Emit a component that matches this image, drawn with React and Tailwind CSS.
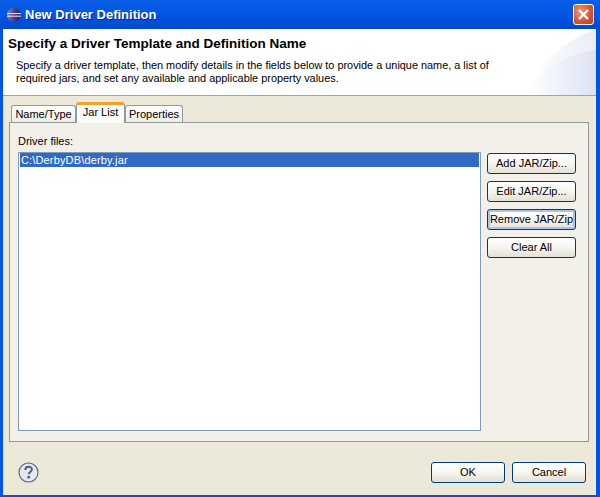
import React from "react";

const font = "font-['Liberation_Sans',Arial,sans-serif]";

const EclipseIcon = () => (
  <svg width="14" height="14" viewBox="0 0 14 14" className="shrink-0">
    <defs>
      <linearGradient id="sphere" x1="0" y1="0" x2="1" y2="0.15">
        <stop offset="0" stopColor="#9a8fc4" />
        <stop offset="0.55" stopColor="#45418a" />
        <stop offset="1" stopColor="#2a2866" />
      </linearGradient>
    </defs>
    <circle cx="7" cy="7" r="7" fill="url(#sphere)" />
    <path d="M0 5.6h14M0 8.2h14" stroke="#e9e9f4" strokeWidth="1" />
  </svg>
);

const CloseIcon = () => (
  <div className="w-[21px] h-[21px] rounded-[3px] border border-white bg-[radial-gradient(circle_at_35%_35%,#ee9a80,#d9512c_60%,#c23d1c)] flex items-center justify-center">
    <svg width="13" height="13" viewBox="0 0 13 13">
      <path d="M2 2l9 9M11 2l-9 9" stroke="#fff" strokeWidth="2.4" />
    </svg>
  </div>
);

const HelpIcon = () => (
  <svg width="21" height="21" viewBox="0 0 21 21" className="-mt-px">
    <circle cx="10.5" cy="10.5" r="9.5" fill="#e6e8ee" stroke="#5a6d90" strokeWidth="1.2" />
    <path d="M7.3 8c0-4.2 6.6-4.2 6.6-.4 0 2.3-3.2 2.4-3.2 4.7" fill="none" stroke="#4a5f85" strokeWidth="2" />
    <circle cx="10.7" cy="15.2" r="1.4" fill="#4a5f85" />
  </svg>
);

const Btn = ({ children, focus, className = "" }) => (
  <button
    className={`h-[21px] rounded-[3px] border border-[#003c74] bg-gradient-to-b from-white via-[#f6f5ef] to-[#e3e0d3] text-[11px] text-black leading-none ${
      focus ? "shadow-[inset_0_0_0_2px_#a9c4ee]" : ""
    } ${className}`}
  >
    {children}
  </button>
);

const Tab = ({ children, active, className = "" }) =>
  active ? (
    <div className={`h-[21px] z-10 bg-[#fbfaf7] border-x border-[#919b9c] border-t-[3px] border-t-[#f0a22e] rounded-t-[3px] flex items-center justify-center text-[11px] pb-[3px] ${className}`}>
      {children}
    </div>
  ) : (
    <div className={`h-[18px] mt-[3px] bg-gradient-to-b from-white to-[#ecebe2] border-x border-t border-[#919b9c] rounded-t-[3px] flex items-center justify-center text-[11px] ${className}`}>
      {children}
    </div>
  );

export default function App() {
  return (
    <div className={`${font} w-[600px] h-[497px] flex flex-col bg-[#0054e3] text-black overflow-hidden`}>
      <div className="h-[29px] shrink-0 flex items-center pl-[7px] pr-[6px] gap-[4px] bg-gradient-to-b from-[#0a5fe8] via-[#0055e5] to-[#0049cc]">
        <EclipseIcon />
        <span className="text-white font-bold text-[13px] flex-1 [text-shadow:1px_1px_0_#0a2a80]">New Driver Definition</span>
        <CloseIcon />
      </div>
      <div className="flex-1 ml-[3px] mr-[4px] mb-[2px] flex flex-col bg-[#ece9d8] min-h-0">
        <div className="relative h-[67px] shrink-0 bg-white border-b border-[#a5a5a0] pl-[5px] overflow-hidden">
          <svg className="absolute right-0 top-0" width="70" height="66" viewBox="0 0 70 66">
            <defs>
              <linearGradient id="fadeOuter" x1="0" y1="0" x2="1" y2="0">
                <stop offset="0" stopColor="#ffffff" />
                <stop offset="1" stopColor="#e9edf8" />
              </linearGradient>
              <linearGradient id="fadeInner" x1="0" y1="0" x2="1" y2="0">
                <stop offset="0" stopColor="#f7f9fd" />
                <stop offset="1" stopColor="#dde3f4" />
              </linearGradient>
            </defs>
            <path d="M0 66C14 36 36 12 70 0V66Z" fill="url(#fadeOuter)" />
            <path d="M14 66V48C30 32 48 24 70 21V66Z" fill="url(#fadeInner)" />
          </svg>
          <h1 className="relative font-bold text-[13.5px] leading-[16px] mt-[7px]">Specify a Driver Template and Definition Name</h1>
          <p className="relative text-[10.9px] leading-[13px] mt-[7px] ml-[8px] w-[480px]">
            Specify a driver template, then modify details in the fields below to provide a unique name, a list of required jars, and set any available and applicable property values.
          </p>
        </div>

        <div className="flex-1 flex flex-col pl-[6px] pr-[7px] pt-[6px] min-h-0">
          <div className="flex pl-[2px] h-[20px] items-start">
            <Tab className="w-[65px]">Name/Type</Tab>
            <Tab active className="w-[49px]">Jar List</Tab>
            <Tab className="w-[58px]">Properties</Tab>
          </div>
          <div className="h-[320px] bg-[#f2f0e9] border border-[#919b9c] flex gap-[6px] pl-[8px] pr-[12px] pt-[12px]">
            <div className="flex flex-col w-[463px]">
              <label className="text-[11px] leading-[13px] h-[17px]">Driver files:</label>
              <div className="h-[279px] bg-white border border-[#7f9db9] px-px">
                <div className="h-[14px] bg-[#316ac5] text-white text-[11px] tracking-[0.15px] leading-[14px] pl-[1px]">C:\DerbyDB\derby.jar</div>
              </div>
            </div>
            <div className="flex flex-col gap-[7px] w-[89px] pt-[18px]">
              <Btn>Add JAR/Zip...</Btn>
              <Btn>Edit JAR/Zip...</Btn>
              <Btn focus>Remove JAR/Zip</Btn>
              <Btn>Clear All</Btn>
            </div>
          </div>
          <div className="flex items-center pl-[9px] pr-[3px] mt-[20px]">
            <HelpIcon />
            <div className="ml-auto flex gap-[7px]">
              <Btn className="w-[74px]">OK</Btn>
              <Btn className="w-[74px]">Cancel</Btn>
            </div>
          </div>
        </div>
      </div>
    </div>
  );
}
